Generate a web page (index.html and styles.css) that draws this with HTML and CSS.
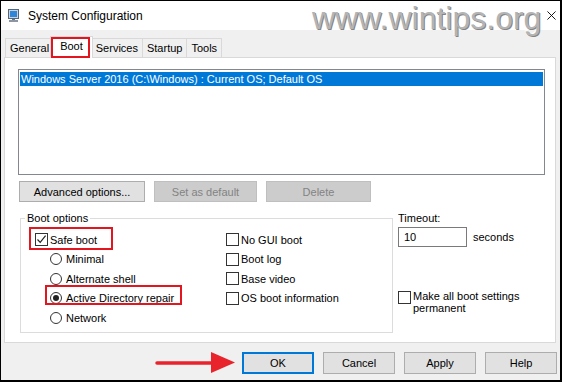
FILE: index.html
```html
<!DOCTYPE html>
<html>
<head>
	<title>System Configuration</title>
	<link rel="stylesheet" href="styles.css">
</head>
<body>
<div class="window">
  <div class="titlebar">
    <svg class="app-icon" viewBox="0 0 11 13">
      <rect x="0.5" y="0.5" width="10" height="9" fill="#c9d3de" stroke="#55657a"/>
      <rect x="2" y="2" width="7" height="6" fill="#2f86d8"/>
      <rect x="4" y="10" width="3" height="1" fill="#6b7685"/>
      <rect x="1" y="11" width="9" height="2" fill="#8c96a3"/>
    </svg>
    <span class="title">System Configuration</span>
    <svg class="close" viewBox="0 0 10 10">
      <path d="M0.5 0.5 L9.5 9.5 M9.5 0.5 L0.5 9.5" stroke="#000" stroke-width="1"/>
    </svg>
  </div>
  <div class="watermark">www.wintips.org</div>

  <div class="tabs">
    <div class="tab">General</div>
    <div class="tab active marked">Boot</div>
    <div class="tab">Services</div>
    <div class="tab">Startup</div>
    <div class="tab">Tools</div>
  </div>

  <div class="panel">
    <div class="oslist">
      <div class="os-item">Windows Server 2016 (C:\Windows) : Current OS; Default OS</div>
    </div>
    <div class="list-buttons">
      <button class="btn btn-advanced">Advanced options...</button>
      <button class="btn btn-set disabled">Set as default</button>
      <button class="btn btn-delete disabled">Delete</button>
    </div>

    <div class="options">
      <fieldset class="group">
        <legend>Boot options</legend>
        <div class="group-grid">
          <div class="col">
            <div class="row mark-safe"><span class="check"><svg viewBox="0 0 11 11"><path d="M1.5 5.5 L4.2 8.3 L9.6 1.6" fill="none" stroke="#222" stroke-width="1.2"/></svg></span>Safe boot</div>
            <div class="row sub"><span class="radio"></span>Minimal</div>
            <div class="row sub"><span class="radio"></span>Alternate shell</div>
            <div class="row sub mark-adr"><span class="radio on"></span>Active Directory repair</div>
            <div class="row sub"><span class="radio"></span>Network</div>
          </div>
          <div class="col">
            <div class="row"><span class="check"></span>No GUI boot</div>
            <div class="row"><span class="check"></span>Boot log</div>
            <div class="row"><span class="check"></span>Base video</div>
            <div class="row"><span class="check"></span>OS boot information</div>
          </div>
        </div>
      </fieldset>

      <div class="side">
        <div class="timeout-label">Timeout:</div>
        <div class="timeout-row">
          <span class="textbox">10</span>
          <span class="unit">seconds</span>
        </div>
        <div class="row permanent"><span class="check"></span><span>Make all boot settings<br>permanent</span></div>
      </div>
    </div>
  </div>

  <div class="footer">
    <button class="btn btn-foot default">OK</button>
    <button class="btn btn-foot">Cancel</button>
    <button class="btn btn-foot">Apply</button>
    <button class="btn btn-foot">Help</button>
  </div>

  <svg class="arrow" viewBox="0 0 82 26">
    <path d="M2 13 L58 13" stroke="#e8232b" stroke-width="3.5" stroke-linecap="round"/>
    <polygon points="56,2 80,12.5 56,23" fill="#e8232b"/>
  </svg>
</div>
</body>
</html>
```

FILE: styles.css
```css
* {
  box-sizing: border-box;
}
body {
  margin: 0;
  font-family: "Liberation Sans", Arial, sans-serif;
  font-size: 11px;
  color: #000;
}
.window {
  position: relative;
  width: 562px;
  height: 382px;
  background-color: #f0f0f0;
  border: solid #000;
  border-width: 1px 2px 2px 1px;
  display: flex;
  flex-direction: column;
  overflow: hidden;
}

/* title bar */
.titlebar {
  height: 29px;
  flex-shrink: 0;
  display: flex;
  align-items: center;
  padding: 0 4px 0 7px;
  background-color: #fff;
}
.app-icon {
  width: 11px;
  height: 13px;
}
.title {
  margin-left: 9px;
  font-size: 12px;
}
.close {
  margin-left: auto;
  width: 9px;
  height: 9px;
}
.watermark {
  position: absolute;
  left: 311px;
  top: 0;
  font-size: 32px;
  line-height: 34px;
  white-space: nowrap;
  color: #b4b4b4;
  text-shadow: 1px 1px 0 #858585, -1px -1px 0 #fff;
}

/* tabs */
.tabs {
  height: 27px;
  flex-shrink: 0;
  display: flex;
  align-items: flex-end;
  padding-left: 4px;
}
.tab {
  height: 19px;
  line-height: 18px;
  padding: 0 4px;
  border: 1px solid #d9d9d9;
  border-bottom: none;
  background-color: #f0f0f0;
  margin-right: -1px;
}
.tab.active {
  position: relative;
  z-index: 1;
  height: 22px;
  margin: 0 -2px -1px -3px;
  padding: 0 9px;
  background-color: #fff;
}
.marked::after {
  content: "";
  position: absolute;
  left: 0;
  right: 2px;
  top: 0;
  bottom: 0;
  border: 2px solid #e3151f;
}

/* panel */
.panel {
  height: 286px;
  flex-shrink: 0;
  margin: 0 4px 0 3px;
  padding: 11px 0 0 13px;
  background-color: #fff;
  border: 1px solid #d9d9d9;
}
.oslist {
  width: 527px;
  height: 106px;
  padding: 2px 1px;
  border: 1px solid #828790;
}
.os-item {
  height: 14px;
  line-height: 14px;
  padding-left: 1px;
  background-color: #0078d7;
  color: #fff;
}
.list-buttons {
  display: flex;
  gap: 9px;
  margin: 6px 0 0 1px;
}
.btn {
  height: 21px;
  padding: 0;
  font: inherit;
  color: #000;
  background-color: #e1e1e1;
  border: 1px solid #adadad;
}
.btn.disabled {
  color: #838383;
  background-color: #cccccc;
  border-color: #bfbfbf;
}
.btn-advanced {
  width: 126px;
}
.btn-set {
  width: 103px;
}
.btn-delete {
  width: 105px;
}

/* boot options */
.options {
  display: flex;
  margin-top: 10px;
}
.group {
  width: 373px;
  height: 121px;
  margin: 0 0 0 2px;
  padding: 5px 0 0 14px;
  border: 1px solid #dcdcdc;
}
.group legend {
  padding: 0 2px;
  margin-left: -10px;
  line-height: 13px;
}
.group-grid {
  display: grid;
  grid-template-columns: 191px auto;
}
.row {
  position: relative;
  display: flex;
  align-items: center;
  width: max-content;
  height: 19.5px;
}
.row.sub {
  margin-left: 15px;
}
.check {
  display: flex;
  align-items: center;
  justify-content: center;
  width: 13px;
  height: 13px;
  margin-right: 2px;
  background-color: #fff;
  border: 1px solid #333;
}
.check svg {
  width: 11px;
  height: 11px;
}
.radio {
  display: flex;
  align-items: center;
  justify-content: center;
  width: 12px;
  height: 12px;
  margin-right: 4px;
  border: 1px solid #333;
  border-radius: 50%;
  background-color: #fff;
}
.radio.on::after {
  content: "";
  width: 6px;
  height: 6px;
  border-radius: 50%;
  background-color: #222;
}
.mark-safe::after,
.mark-adr::after {
  content: "";
  position: absolute;
  border: 2px solid #e3151f;
}
.mark-safe::after {
  left: -6px;
  right: -16px;
  top: -3px;
  bottom: 0;
}
.mark-adr::after {
  left: -5px;
  right: -8px;
  top: -4px;
  bottom: 3px;
}

.side {
  margin-left: 5px;
}
.timeout-label {
  line-height: 13px;
}
.timeout-row {
  display: flex;
  align-items: center;
  margin-top: 2px;
}
.textbox {
  width: 69px;
  height: 20px;
  line-height: 18px;
  padding-left: 5px;
  border: 1px solid #7a7a7a;
}
.unit {
  margin-left: 6px;
}
.row.permanent {
  align-items: flex-start;
  height: auto;
  margin-top: 43px;
  line-height: 12px;
}
.row.permanent .check {
  margin-top: 1px;
}

/* footer buttons */
.footer {
  display: flex;
  justify-content: flex-end;
  gap: 9px;
  margin-top: 9px;
  padding-right: 3px;
}
.btn-foot {
  width: 72px;
  height: 22px;
}
.btn-foot.default {
  border: 2px solid #0078d7;
}
.arrow {
  position: absolute;
  left: 154px;
  top: 349px;
  width: 82px;
  height: 26px;
}
```
